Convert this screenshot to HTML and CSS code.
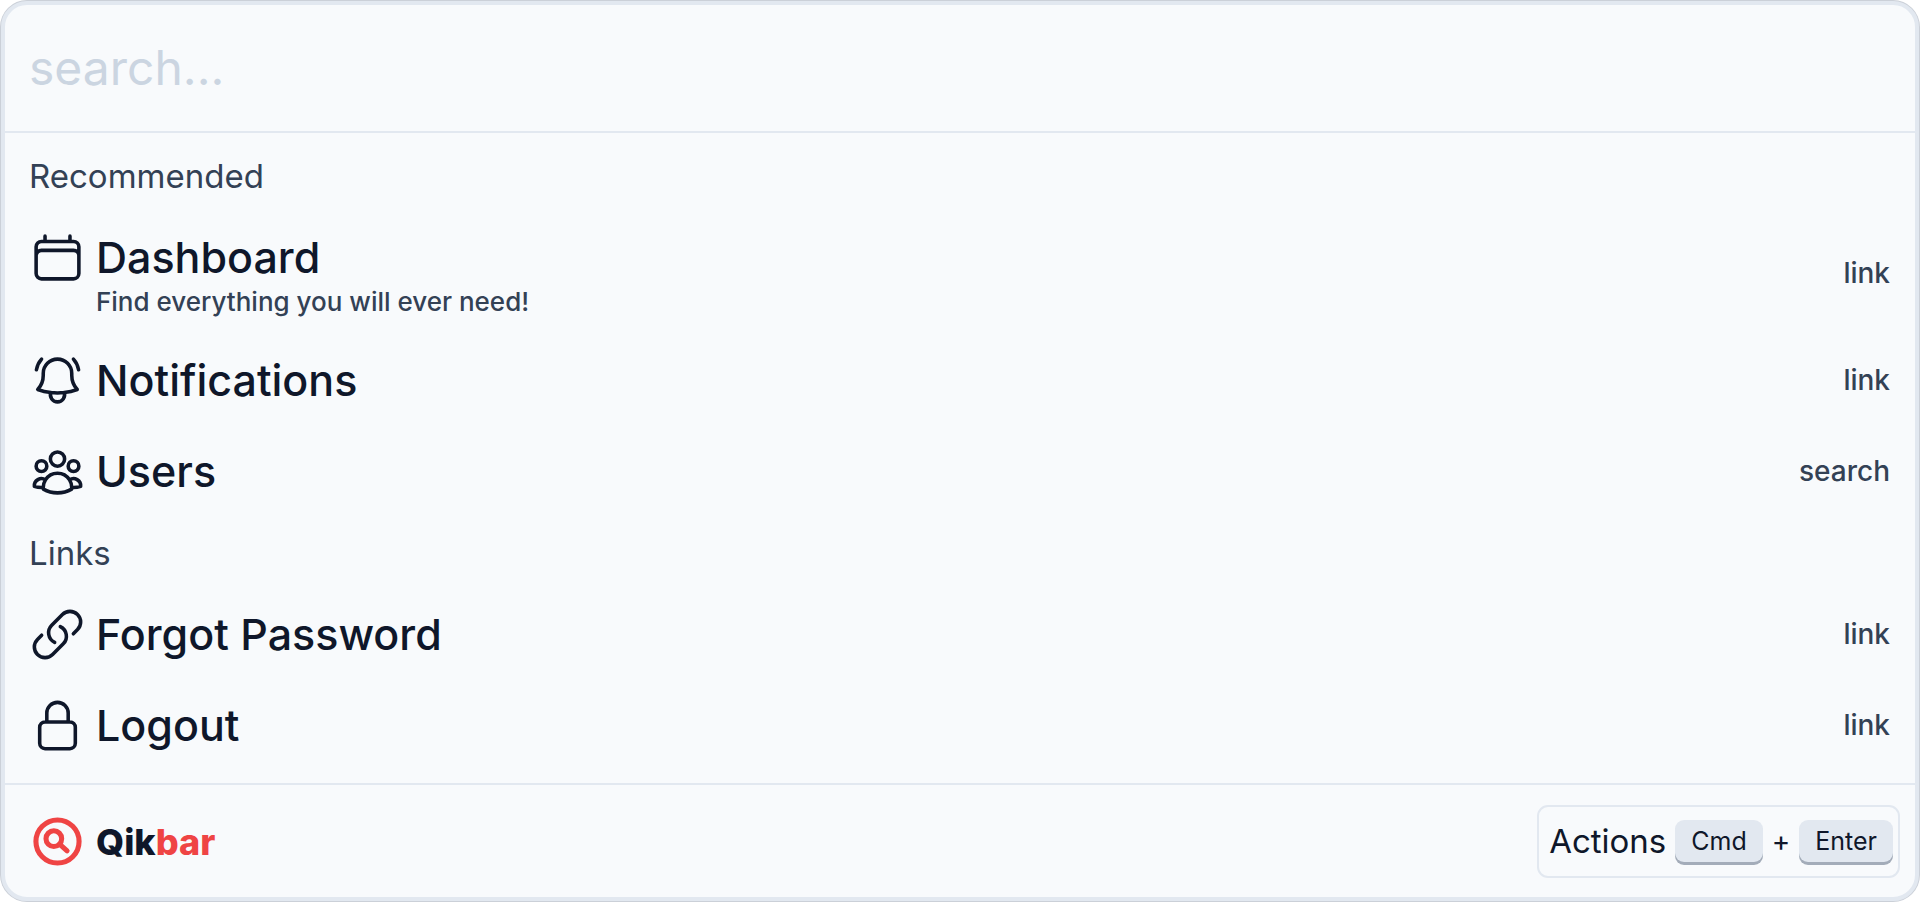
FILE: index.html
```
<!DOCTYPE html>
<html lang="en">
    <head>
        <meta charset="utf-8">
        <title>Qikbar</title>
        <link rel="stylesheet" href="styles.css">
    </head>
    <body>
        <div class="qikbar">
            <div class="search">
                <input class="search-input" type="text" placeholder="search..." aria-label="search">
            </div>
            <div class="results">
                <h2 class="group">Recommended</h2>
                <a class="item" href="#">
                    <svg class="icon" viewBox="0 0 24 24"><path d="M6.75 3v2.25M17.25 3v2.25M3 18.75V7.5a2.25 2.25 0 012.25-2.25h13.5A2.25 2.25 0 0121 7.5v11.25m-18 0A2.25 2.25 0 005.25 21h13.5A2.25 2.25 0 0021 18.75m-18 0v-7.5A2.25 2.25 0 015.25 9h13.5A2.25 2.25 0 0121 11.25v7.5"/></svg>
                    <span class="text">
                        <span class="title">Dashboard</span>
                        <span class="sub">Find everything you will ever need!</span>
                    </span>
                    <span class="type">link</span>
                </a>
                <a class="item" href="#">
                    <svg class="icon" viewBox="0 0 24 24"><path d="M14.857 17.082a23.848 23.848 0 005.454-1.31A8.967 8.967 0 0118 9.75v-.7V9A6 6 0 006 9v.75a8.967 8.967 0 01-2.312 6.022c1.733.64 3.56 1.085 5.455 1.31m5.714 0a24.255 24.255 0 01-5.714 0m5.714 0a3 3 0 11-5.714 0M3.124 7.5A8.969 8.969 0 015.292 3m13.416 0a8.969 8.969 0 012.168 4.5"/></svg>
                    <span class="text">
                        <span class="title">Notifications</span>
                    </span>
                    <span class="type">link</span>
                </a>
                <a class="item" href="#">
                    <svg class="icon" viewBox="0 0 24 24"><path d="M18 18.72a9.094 9.094 0 003.741-.479 3 3 0 00-4.682-2.72m.94 3.198l.001.031c0 .225-.012.447-.037.666A11.944 11.944 0 0112 21c-2.17 0-4.207-.576-5.963-1.584A6.062 6.062 0 016 18.719m12 0a5.971 5.971 0 00-.941-3.197m0 0A5.995 5.995 0 0012 12.75a5.995 5.995 0 00-5.058 2.772m0 0a3 3 0 00-4.681 2.72 8.986 8.986 0 003.74.477m.94-3.197a5.971 5.971 0 00-.94 3.197M15 6.75a3 3 0 11-6 0 3 3 0 016 0zm6 3a2.25 2.25 0 11-4.5 0 2.25 2.25 0 014.5 0zm-13.5 0a2.25 2.25 0 11-4.5 0 2.25 2.25 0 014.5 0z"/></svg>
                    <span class="text">
                        <span class="title">Users</span>
                    </span>
                    <span class="type">search</span>
                </a>
                <h2 class="group">Links</h2>
                <a class="item" href="#">
                    <svg class="icon" viewBox="0 0 24 24"><path d="M13.19 8.688a4.5 4.5 0 011.242 7.244l-4.5 4.5a4.5 4.5 0 01-6.364-6.364l1.757-1.757m13.35-.622l1.757-1.757a4.5 4.5 0 00-6.364-6.364l-4.5 4.5a4.5 4.5 0 001.242 7.244"/></svg>
                    <span class="text">
                        <span class="title">Forgot Password</span>
                    </span>
                    <span class="type">link</span>
                </a>
                <a class="item" href="#">
                    <svg class="icon" viewBox="0 0 24 24"><path d="M16.5 10.5V6.75a4.5 4.5 0 10-9 0v3.75m-.75 11.25h10.5a2.25 2.25 0 002.25-2.25v-6.75a2.25 2.25 0 00-2.25-2.25H6.75a2.25 2.25 0 00-2.25 2.25v6.75a2.25 2.25 0 002.25 2.25z"/></svg>
                    <span class="text">
                        <span class="title">Logout</span>
                    </span>
                    <span class="type">link</span>
                </a>
            </div>
            <div class="footer">
                <a class="brand" href="#">
                    <svg class="logo" viewBox="0 0 56 56">
                        <circle cx="28" cy="28" r="21.2"/>
                        <circle cx="24.4" cy="25.2" r="7.7"/>
                        <path d="M30 30.6l7.4 6.6"/>
                    </svg>
                    <span>Qik<span class="red">bar</span></span>
                </a>
                <button class="actions" type="button">
                    <span class="actions-text">Actions</span>
                    <kbd>Cmd</kbd>
                    <span class="plus">+</span>
                    <kbd>Enter</kbd>
                </button>
            </div>
        </div>
    </body>
</html>
```

FILE: styles.css
```
* {
    box-sizing: border-box;
}
body {
    margin: 0;
    padding: 1px;
    background-color: white;
    font-family: Inter, sans-serif;
    color: #0f172a;
}
a {
    color: inherit;
    text-decoration: none;
}
.qikbar {
    background-color: #f8fafc;
    border: 4px solid #e2e8f0;
    border-radius: 26px;
    box-shadow: 0 0 0 1px #cbd0d8;
}
.search {
    border-bottom: 2px solid #e2e8f0;
}
.search-input {
    display: block;
    width: 100%;
    height: 126px;
    padding: 0 24px 2px;
    border: 0;
    outline: 0;
    background-color: transparent;
    font-family: inherit;
    font-size: 48px;
    color: #0f172a;
}
.search-input::placeholder {
    color: #cbd5e1;
    opacity: 1;
}
.results {
    padding: 7px 25px 12px 24px;
}
.group {
    margin: 0;
    font-size: 33px;
    font-weight: 400;
    line-height: 72px;
    color: #334155;
}
.item {
    display: flex;
    align-items: flex-start;
    gap: 10px;
    padding: 17px 0;
}
.icon {
    width: 57px;
    height: 57px;
    fill: none;
    stroke: #0f172a;
    stroke-width: 1.5;
    stroke-linecap: round;
    stroke-linejoin: round;
}
.text {
    display: flex;
    flex-direction: column;
    flex: 1;
    font-weight: 500;
}
.title {
    font-size: 43px;
    line-height: 57px;
}
.sub {
    font-size: 26px;
    line-height: 32px;
    color: #334155;
}
.type {
    align-self: center;
    padding-bottom: 2px;
    font-size: 28px;
    font-weight: 500;
    color: #334155;
}
.footer {
    display: flex;
    align-items: center;
    justify-content: space-between;
    padding: 20px 15px 19px 24px;
    border-top: 2px solid #e2e8f0;
}
.brand {
    display: flex;
    align-items: center;
    gap: 10px;
    font-size: 36px;
    font-weight: 800;
}
.logo {
    width: 57px;
    height: 57px;
    fill: none;
    stroke: #ef4444;
    stroke-width: 5;
    stroke-linecap: round;
}
.red {
    color: #ef4444;
}
.actions {
    display: flex;
    align-items: center;
    gap: 9px;
    height: 73px;
    padding: 0 5px 2px 10px;
    border: 2px solid #e2e8f0;
    border-radius: 11px;
    background-color: transparent;
    font-family: inherit;
    color: #0f172a;
}
.actions-text {
    font-size: 33px;
}
.plus {
    font-size: 28px;
}
kbd {
    padding: 0 16px;
    border-radius: 9px;
    background-color: #e2e8f0;
    box-shadow: 0 3px 0 #a3acb9;
    font-family: inherit;
    font-size: 25px;
    line-height: 42px;
}
```
